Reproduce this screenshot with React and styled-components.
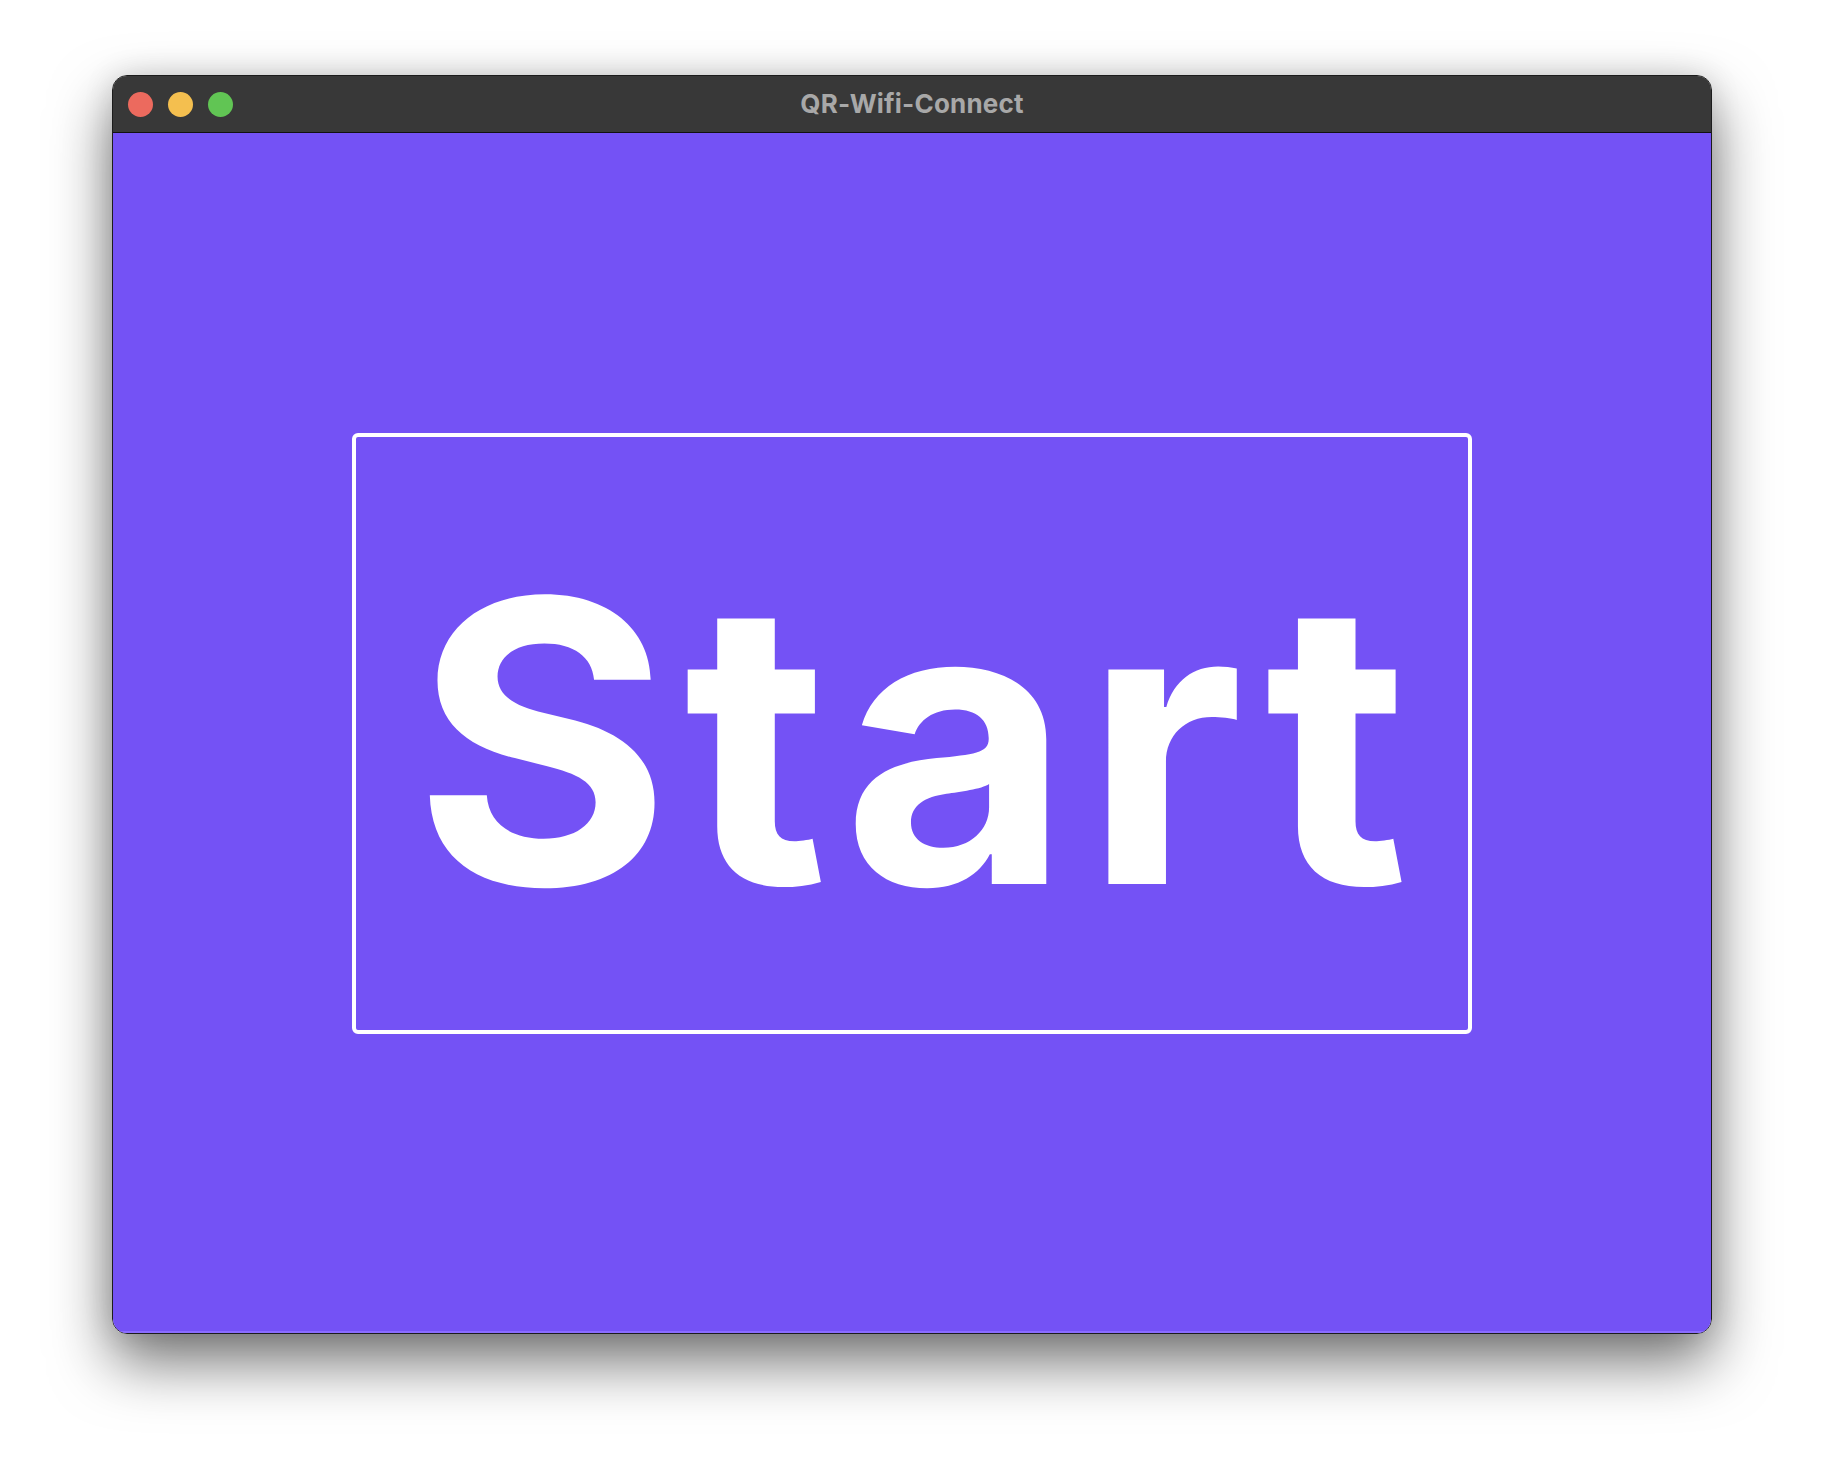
import React from "react";
import styled, { createGlobalStyle } from "styled-components";

const GlobalStyle = createGlobalStyle`
  html, body {
    margin: 0;
    padding: 0;
    background: #ffffff;
  }
`;

const App = () => {
  return (
    <>
      <GlobalStyle />
      <Page>
        <Window>
          <TitleBar>
            <Lights>
              <Light color="#ec6a5e" />
              <Light color="#f4bf4f" />
              <Light color="#61c554" />
            </Lights>
            <Title>QR-Wifi-Connect</Title>
          </TitleBar>
          <Content>
            <StartButton>Start</StartButton>
          </Content>
        </Window>
      </Page>
    </>
  );
};

export default App;

const Page = styled.div`
  width: 1824px;
  height: 1482px;
  display: flex;
  justify-content: center;
  align-items: flex-start;
  padding-top: 75px;
  box-sizing: border-box;
  overflow: hidden;
`;

const Window = styled.div`
  width: 1600px;
  height: 1259px;
  display: flex;
  flex-direction: column;
  border-radius: 15px;
  overflow: hidden;
  box-sizing: border-box;
  border: 1px solid #1c1c1c;
  box-shadow: 0 28px 60px rgba(0, 0, 0, 0.55), 0 0 30px rgba(0, 0, 0, 0.12);
`;

const TitleBar = styled.div`
  position: relative;
  height: 56px;
  flex-shrink: 0;
  display: flex;
  align-items: center;
  justify-content: center;
  background: #383838;
  border-bottom: 1px solid #111111;
`;

const Lights = styled.div`
  position: absolute;
  left: 15px;
  top: 0;
  bottom: 0;
  display: flex;
  align-items: center;
  gap: 15px;
`;

const Light = styled.span`
  width: 25px;
  height: 25px;
  border-radius: 50%;
  background: ${(p) => p.color};
`;

const Title = styled.div`
  font-family: Inter, "Liberation Sans", sans-serif;
  font-weight: 700;
  font-size: 26px;
  color: #a8a8a8;
  letter-spacing: 0.2px;
  margin-top: -2px;
`;

const Content = styled.div`
  flex: 1;
  display: flex;
  align-items: center;
  justify-content: center;
  background: #7452f5;
  box-shadow: inset 0 -2px 0 #8a6cff;
`;

const StartButton = styled.button`
  width: 1120px;
  height: 601px;
  display: flex;
  align-items: center;
  justify-content: center;
  box-sizing: border-box;
  background: transparent;
  border: 4px solid #ffffff;
  border-radius: 6px;
  color: #ffffff;
  font-family: Inter, "Liberation Sans", sans-serif;
  font-weight: 700;
  font-size: 393px;
  line-height: 1;
  letter-spacing: 13px;
  padding: 16px 0 0 11px;
  cursor: pointer;
`;
